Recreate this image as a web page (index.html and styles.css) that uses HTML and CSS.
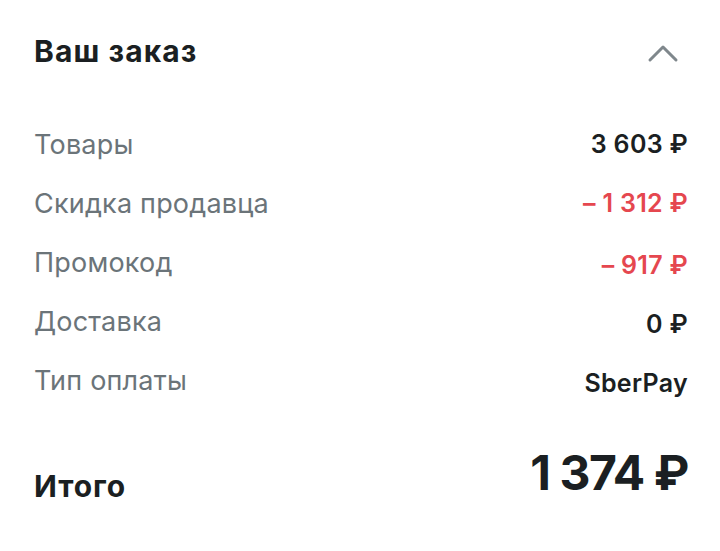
FILE: index.html
```html
<!DOCTYPE html>
<html lang="ru">
<head>
<meta charset="utf-8">
<link rel="stylesheet" href="styles.css">
</head>
<body>
<section class="order">
  <header class="order-head">
    <h2 class="order-title">Ваш заказ</h2>
    <svg class="chevron" width="32" height="20" viewBox="0 0 32 20">
      <polyline points="3,16 16,3 29,16" fill="none" stroke="#7f878c" stroke-width="3" stroke-linecap="round" stroke-linejoin="round"/>
    </svg>
  </header>
  <div class="rows">
    <div class="row"><span class="label">Товары</span><span class="value">3 603 ₽</span></div>
    <div class="row"><span class="label">Скидка продавца</span><span class="value neg">– 1 312 ₽</span></div>
    <div class="row"><span class="label">Промокод</span><span class="value neg low">– 917 ₽</span></div>
    <div class="row"><span class="label">Доставка</span><span class="value low">0 ₽</span></div>
    <div class="row"><span class="label">Тип оплаты</span><span class="value low">SberPay</span></div>
  </div>
  <div class="total">
    <span class="total-label">Итого</span>
    <span class="total-value">1 374 ₽</span>
  </div>
</section>
</body>
</html>
```

FILE: styles.css
```css
html, body {
  margin: 0;
  padding: 0;
  background: #ffffff;
}
body {
  font-family: Inter, "Noto Sans", "Liberation Sans", sans-serif;
  color: #1b1f22;
}
.order {
  padding: 31px 32px 0 34px;
}
.order-head {
  display: flex;
  justify-content: space-between;
  align-items: center;
  height: 40px;
}
.order-title {
  margin: 0;
  font-size: 30px;
  line-height: 40px;
  font-weight: 700;
  letter-spacing: 1.1px;
}
.chevron {
  display: block;
  margin-right: 9px;
  margin-top: 6px;
}
.rows {
  margin-top: 44px;
}
.row {
  display: flex;
  justify-content: space-between;
  align-items: flex-start;
  height: 59px;
  line-height: 59px;
}
.label {
  font-size: 27px;
  color: #6b7479;
  font-weight: 400;
  letter-spacing: 0.2px;
}
.value {
  font-size: 25px;
  font-weight: 600;
  color: #1b1f22;
  letter-spacing: 0.3px;
}
.value.low {
  padding-top: 3px;
}
.value.neg {
  color: #e5474f;
}
.total {
  display: flex;
  justify-content: space-between;
  align-items: flex-start;
  margin-top: 38px;
}
.total-label {
  font-size: 30px;
  font-weight: 700;
  line-height: 40px;
  padding-top: 18px;
  letter-spacing: 0.9px;
}
.total-value {
  font-size: 48px;
  font-weight: 700;
  line-height: 50px;
  letter-spacing: -1.4px;
}
```
